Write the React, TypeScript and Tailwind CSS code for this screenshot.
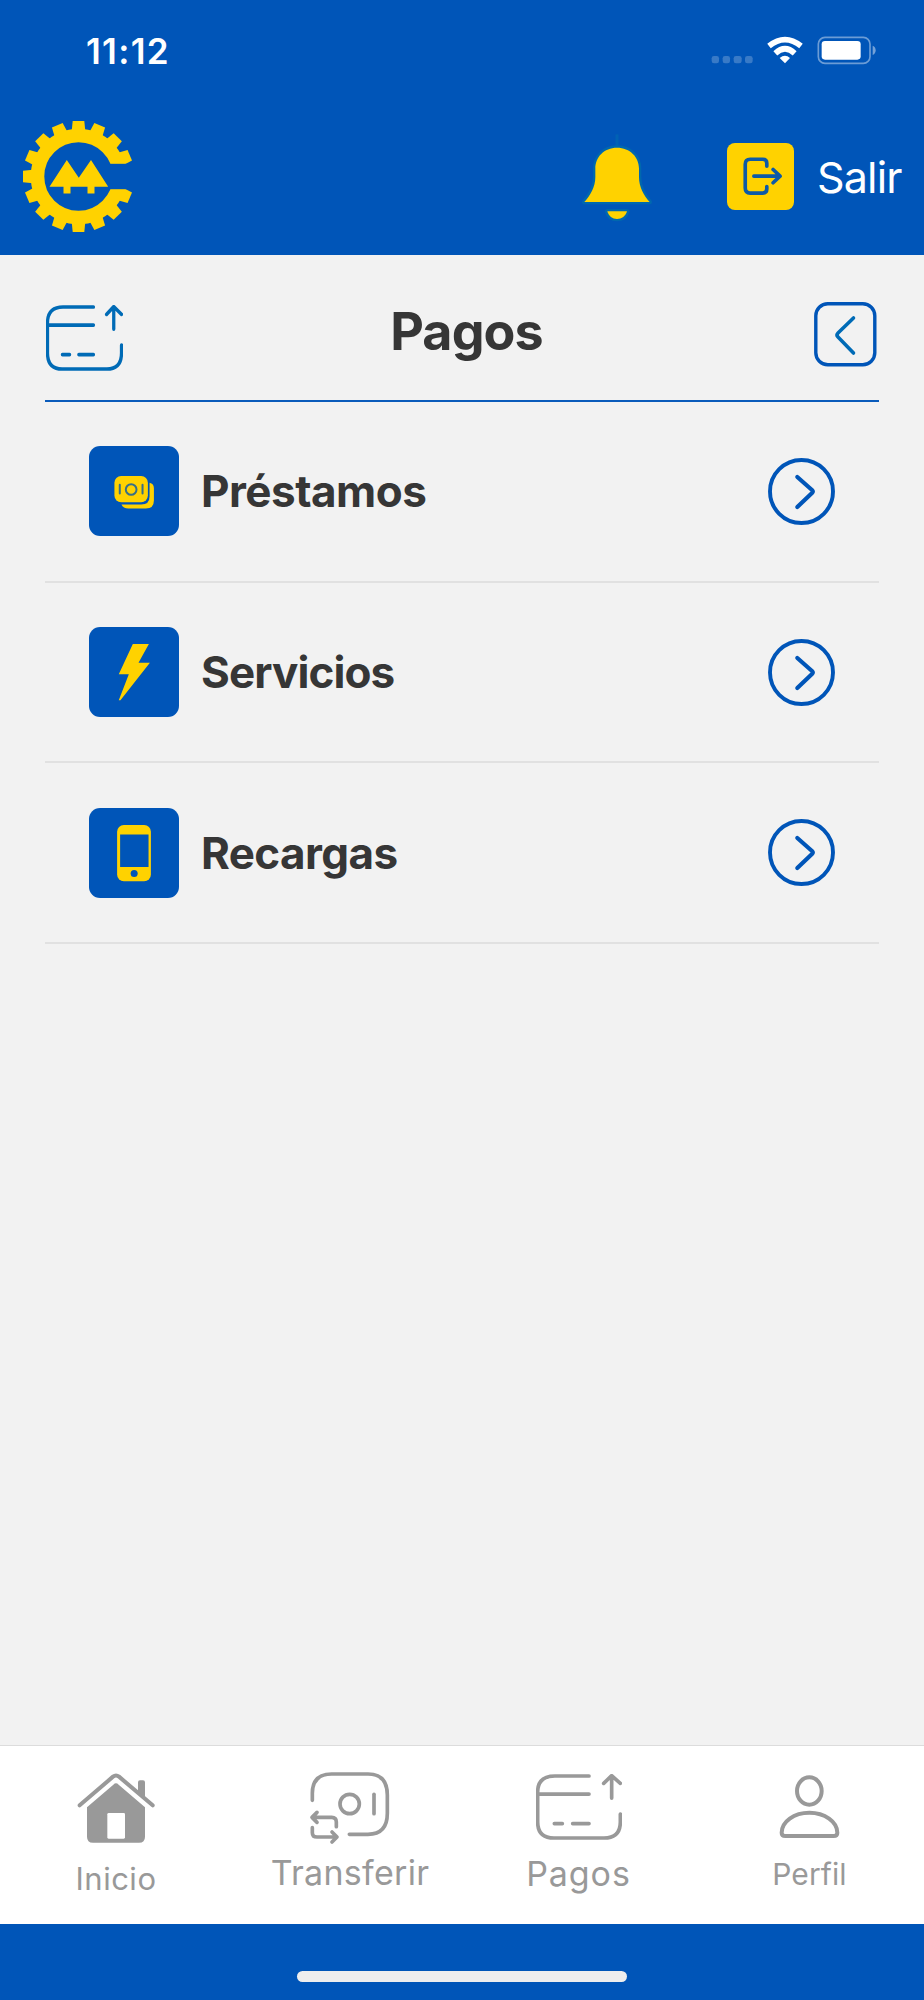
import type { ReactNode } from "react";

interface MenuItem {
    label: string;
    icon: ReactNode;
    text: string;
}

const teeth = Array.from({ length: 15 }, (_, i) => (i + 1) * 22.5);

function Logo() {
    return (
        <svg className="w-[112px] h-[112px]" viewBox="-55.5 -55.5 112 112" fill="#ffd200">
            <mask id="gap">
                <rect x="-56" y="-56" width="112" height="112" fill="white" />
                <rect x="0" y="-12.7" width="56" height="25.4" fill="black" />
            </mask>
            <g mask="url(#gap)">
                <circle r="41" fill="none" stroke="#ffd200" strokeWidth="13.6" />
                {teeth.map((angle) => (
                    <path key={angle} d="M45.5-6.8L55.5-5.8V5.8L45.5 6.8Z" transform={`rotate(${angle})`} />
                ))}
            </g>
            <path d="M-29 10.2L-11.7-16.5L.3 1.3L12.5-16.5L29.7 10.2H16V17H9V10.2H-8V17H-15V10.2Z" />
        </svg>
    );
}

function BellIcon() {
    return (
        <svg className="w-[72px] h-[90px]" viewBox="63 398 216 270">
            <path d="M171 402V440" stroke="#0062b4" strokeWidth="9" />
            <g fill="#ffd200" stroke="#0068ae" strokeWidth="14" paintOrder="stroke" strokeLinejoin="round">
                <path d="M171 442C132 442 106 470 106 505V530C106 560 91 585 73 605H269C251 585 237 560 237 530V505C237 470 210 442 171 442Z" />
                <path d="M142 633H201C197 648 185 656 171 656S146 648 142 633Z" />
            </g>
        </svg>
    );
}

function ExitIcon() {
    return (
        <svg className="w-[67px] h-[67px]" viewBox="502 429 202 202">
            <rect x="502" y="429" width="202" height="202" rx="24" fill="#ffd200" />
            <path d="M622 499V490Q622 478 610 478H572Q557 478 557 493V565Q557 580 572 580H610Q622 580 622 568V560M583 529H661M641 509L662 529L641 549" fill="none" stroke="#0d5aa7" strokeWidth="11" strokeLinecap="round" strokeLinejoin="round" />
        </svg>
    );
}

function StatusIcons() {
    return (
        <svg className="w-[166px] h-[30px]" viewBox="454 105 498 90">
            <g fill="white" fillOpacity=".22">
                <rect x="456" y="168" width="22" height="22" rx="7" />
                <rect x="489" y="168" width="22" height="22" rx="7" />
                <rect x="522" y="168" width="24" height="22" rx="7" />
                <rect x="556" y="168" width="23" height="22" rx="7" />
            </g>
            <g fill="none" stroke="white" strokeWidth="17">
                <path d="M628 138Q676 100 724 138" />
                <path d="M647 160Q676 133 705 160" />
            </g>
            <path d="M660 174Q676 160 691 174L676 190Z" fill="white" />
            <rect x="776" y="112" width="155" height="78" rx="20" fill="none" stroke="white" strokeOpacity=".42" strokeWidth="5" />
            <rect x="786" y="123" width="117" height="56" rx="10" fill="white" />
            <path d="M939 137Q948 141 948 151T939 165Z" fill="white" fillOpacity=".45" />
        </svg>
    );
}

function CardIcon({ className }: { className: string }) {
    return (
        <svg className={className} viewBox="138 132 258 197" preserveAspectRatio="none" fill="none" stroke="currentColor" strokeWidth="11" strokeLinecap="round" strokeLinejoin="round">
            <path d="M297 138H195Q143 138 143 186V275Q143 323 192 323H342Q391 323 391 275V252M145 192H297M193 280H217M248 280H297" />
            <path d="M365 204V138M341 160L365 137L391 160" />
        </svg>
    );
}

function LoanIcon() {
    return (
        <svg className="w-[90px] h-[90px]" viewBox="178 499 269 269">
            <rect x="178" y="499" width="269" height="269" rx="33" fill="#0055b8" />
            <path d="M359 609Q372 612 372 625V662Q372 686 348 686H296Q280 686 275 674H334Q359 674 359 649Z" fill="#ffd200" />
            <rect x="254" y="589" width="100" height="78" rx="20" fill="#ffd200" />
            <g fill="none" stroke="#386f86" strokeWidth="6" strokeLinecap="round">
                <circle cx="304" cy="629" r="16" />
                <path d="M270 615V641M338 615V641" />
            </g>
        </svg>
    );
}

function BoltIcon() {
    return (
        <svg className="w-[90px] h-[90px]" viewBox="58 51 269 269">
            <rect x="58" y="51" width="269" height="269" rx="33" fill="#0055b8" />
            <path d="M189 102H237L206 158H240L152 270H147L177 192H147Z" fill="#ffd200" />
        </svg>
    );
}

function PhoneIcon() {
    return (
        <svg className="w-[90px] h-[90px]" viewBox="58 594 269 269">
            <rect x="58" y="594" width="269" height="269" rx="33" fill="#0055b8" />
            <rect x="142" y="645" width="101" height="168" rx="20" fill="#ffd200" />
            <path d="M151 673H236V770H151Z" fill="#0055b8" />
            <circle cx="193" cy="790" r="10.5" fill="#0055b8" />
        </svg>
    );
}

function HomeIcon() {
    return (
        <svg className="w-[90px] h-[80px]" viewBox="123 114 270 240">
            <path d="M149 226L249 140Q258 133 267 140L368 226" fill="none" stroke="#999" strokeWidth="12" strokeLinecap="round" />
            <path d="M324 184V157Q324 151 330 151H339Q345 151 345 157V204Z" fill="#999" />
            <path d="M171 232L250 164Q258 156 266 164L345 232V320Q345 338 327 338H189Q171 338 171 320Z" fill="#999" />
            <rect x="232" y="249" width="53" height="77" rx="4" fill="white" />
        </svg>
    );
}

function TransferIcon() {
    return (
        <svg className="w-[90px] h-[80px]" viewBox="816 114 270 240" fill="none" stroke="#999" strokeWidth="11" strokeLinecap="round" strokeLinejoin="round">
            <path d="M847 211V190Q847 132 905 132H1014Q1072 132 1072 195V250Q1072 313 1014 313H958" />
            <circle cx="959" cy="222" r="29" />
            <path d="M1032 193V251" />
            <path d="M919 290V276Q919 262 905 262H848M861 247L846 262L861 277" />
            <path d="M847 293V308Q847 321 861 321H918M906 306L921 321L906 336" />
        </svg>
    );
}

function ProfileIcon() {
    return (
        <svg className="w-[90px] h-[80px]" viewBox="822 114 270 240" fill="none" stroke="#999" strokeWidth="12" strokeLinejoin="round">
            <ellipse cx="958" cy="183" rx="37" ry="41" />
            <path d="M886 318Q875 318 875 308C875 275 912 248 958 248S1042 275 1042 308Q1042 318 1031 318Z" />
        </svg>
    );
}

const items: MenuItem[] = [
    { label: "Préstamos", icon: <LoanIcon />, text: "tracking-[-0.5px]" },
    { label: "Servicios", icon: <BoltIcon />, text: "tracking-[-0.9px]" },
    { label: "Recargas", icon: <PhoneIcon />, text: "tracking-[-0.6px]" },
];

const tabs: MenuItem[] = [
    { label: "Inicio", icon: <HomeIcon />, text: "text-[31px] mt-[11px] tracking-[0.5px] ml-[1px]" },
    { label: "Transferir", icon: <TransferIcon />, text: "text-[34px] mt-[5px] ml-[7px] tracking-[0.3px]" },
    { label: "Pagos", icon: <div className="h-[80px] pt-[6px] pl-[3px]"><CardIcon className="w-[86px] h-[66px]" /></div>, text: "text-[34px] mt-[6px] ml-[2px] tracking-[0.9px]" },
    { label: "Perfil", icon: <ProfileIcon />, text: "text-[30px] mt-[6px] ml-[2px] tracking-[0.1px]" },
];

export default function App() {
    return (
        <div className="w-[924px] h-[2000px] flex flex-col bg-[#f2f2f2] font-['Inter',sans-serif] text-[#363636]">
            <header className="h-[254.5px] shrink-0 bg-[#0055b8] text-white">
                <div className="h-[99px] flex justify-between items-start pl-[86px] pr-[47px]">
                    <span className="mt-[30px] text-[35px] leading-[42px] font-semibold tracking-[1.3px]">11:12</span>
                    <div className="mt-[35px]"><StatusIcons /></div>
                </div>
                <div className="h-[155px] flex items-center pl-[23px]">
                    <Logo />
                    <div className="ml-[446px] mt-[2px]"><BellIcon /></div>
                    <button className="ml-[74.4px] flex items-center gap-[22.5px]">
                        <ExitIcon />
                        <span className="text-[43px] leading-[52px] tracking-[-0.8px]">Salir</span>
                    </button>
                </div>
            </header>

            <main className="flex-1 px-[45px]">
                <div className="h-[147.5px] flex justify-between items-start border-b-[2.5px] border-[#0a5bbb]">
                    <CardIcon className="w-[77px] h-[66px] mt-[50.5px] ml-[1px] text-[#006bb6]" />
                    <h1 className="mt-[46px] mr-[4px] text-[52px] leading-[62px] font-bold tracking-[-0.9px]">Pagos</h1>
                    <svg className="w-[63px] h-[65px] mt-[47px] mr-[2px]" viewBox="0 0 63 65" fill="none" strokeLinecap="round" strokeLinejoin="round">
                        <rect x="1.8" y="1.8" width="59" height="61" rx="12" stroke="#0055b8" strokeWidth="3.4" />
                        <path d="M39.5 16L24 31Q22 33 24 35L39.5 51" stroke="#006bb6" strokeWidth="3.6" />
                    </svg>
                </div>

                {items.map((item) => (
                    <div key={item.label} className="h-[180.7px] flex items-center border-b-2 border-[#e1e1e1] pl-[44px] pr-[44.5px]">
                        {item.icon}
                        <span className={`ml-[22px] text-[44px] leading-[52px] font-bold ${item.text}`}>{item.label}</span>
                        <svg className="ml-auto w-[67px] h-[67px]" viewBox="0 0 67 67" fill="none" stroke="#0055b8" strokeLinecap="round" strokeLinejoin="round">
                            <circle cx="33.5" cy="33.5" r="31.5" strokeWidth="3.9" />
                            <path d="M29.3 19L44 32Q45.5 33.5 44 35L29.3 49" strokeWidth="4.2" />
                        </svg>
                    </div>
                ))}
            </main>

            <nav className="h-[179px] shrink-0 grid grid-cols-4 bg-white border-t border-[#dcdcdc]">
                {tabs.map((tab) => (
                    <button key={tab.label} className="flex flex-col items-center pt-[22px] text-[#999]">
                        {tab.icon}
                        <span className={`leading-[40px] ${tab.text}`}>{tab.label}</span>
                    </button>
                ))}
            </nav>
            <footer className="h-[76px] shrink-0 flex justify-center bg-[#0055b8] pt-[47px]">
                <div className="w-[330px] h-[11px] rounded-full bg-[#eeeeee]" />
            </footer>
        </div>
    );
}
